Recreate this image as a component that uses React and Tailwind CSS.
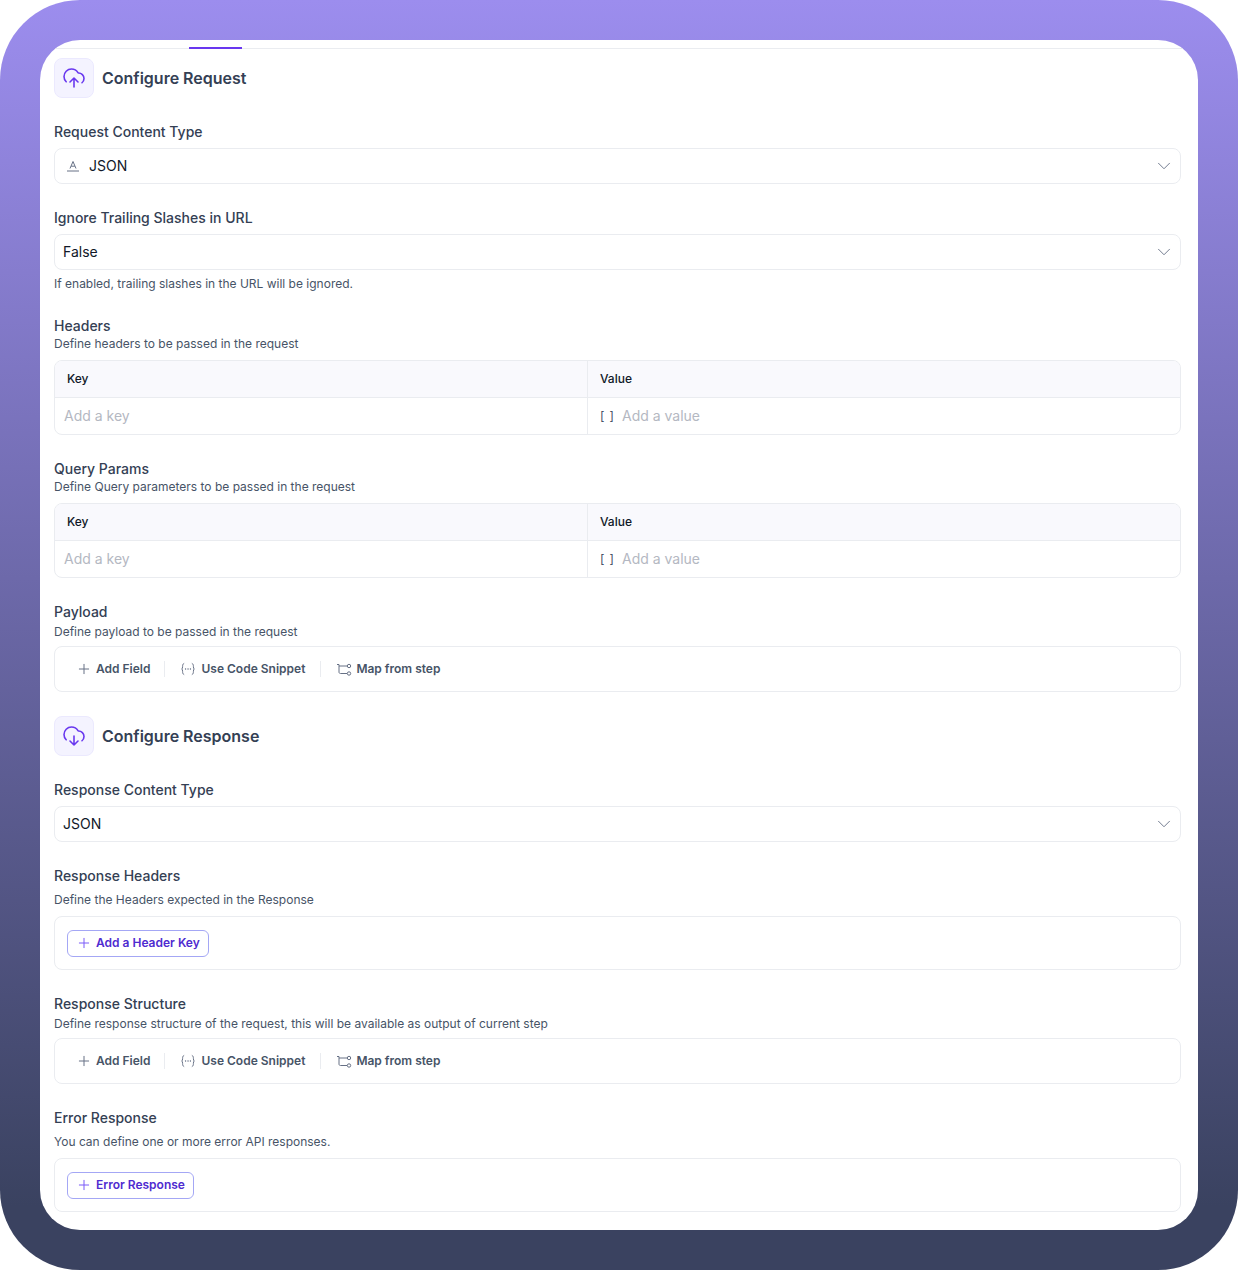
import { ChevronDown, Plus } from 'lucide-react';

const CloudUp = () => (
    <svg width="24" height="24" viewBox="0 0 24 24" fill="none" stroke="#6938ef" strokeWidth="1.6" strokeLinecap="round" strokeLinejoin="round">
        <path d="M8 16L12 12M12 12L16 16M12 12V21M20 16.7428C21.2215 15.734 22 14.2079 22 12.5C22 9.46243 19.5376 7 16.5 7C16.2815 7 16.0771 6.886 15.9661 6.69774C14.6621 4.48484 12.2544 3 9.5 3C5.35786 3 2 6.35786 2 10.5C2 12.5661 2.83545 14.4371 4.18695 15.7935" />
    </svg>
);

const CloudDown = () => (
    <svg width="24" height="24" viewBox="0 0 24 24" fill="none" stroke="#6938ef" strokeWidth="1.6" strokeLinecap="round" strokeLinejoin="round">
        <path d="M8 17L12 21M12 21L16 17M12 21V12M20 16.7428C21.2215 15.734 22 14.2079 22 12.5C22 9.46243 19.5376 7 16.5 7C16.2815 7 16.0771 6.886 15.9661 6.69774C14.6621 4.48484 12.2544 3 9.5 3C5.35786 3 2 6.35786 2 10.5C2 12.5661 2.83545 14.4371 4.18695 15.7935" />
    </svg>
);

const SectionTitle = ({ icon, title, className }) => (
    <div className={`flex items-center gap-2 ${className || ''}`}>
        <div className="flex h-10 w-10 items-center justify-center rounded-lg border border-[#ebe9fe] bg-[#f4f3ff]">
            {icon}
        </div>
        <h2 className="text-base font-semibold leading-6 text-[#344054]">{title}</h2>
    </div>
);

const Label = ({ children, className }) => (
    <div className={`h-5 text-sm font-medium leading-5 text-[#344054] ${className || ''}`}>{children}</div>
);

const Hint = ({ children, className }) => (
    <p className={`h-4 text-xs leading-4 text-[#475467] ${className || ''}`}>{children}</p>
);

const JsonIcon = () => (
    <svg width="14" height="14" viewBox="0 0 14 14" fill="none" stroke="#667085" strokeWidth="1" className="mr-[9px] ml-[3px]">
        <path d="M4 9.5 L7 2.5 L10 9.5 M5.2 7.2 H8.8" />
        <path d="M1 12 H13" />
    </svg>
);

const Select = ({ value, icon }) => (
    <div className="flex h-9 items-center rounded-lg border border-[#eaecf0] bg-white pr-[5px] pl-2">
        {icon}
        <span className="flex-1 text-sm leading-5 text-[#101828]">{value}</span>
        <ChevronDown size={22} strokeWidth={1} className="text-[#667085]" />
    </div>
);

const KeyValueTable = () => (
    <div className="mt-2 overflow-hidden rounded-lg border border-[#eaecf0]">
        <div className="flex h-[37px] border-b border-[#eaecf0] bg-[#f9f9fd] text-xs font-medium text-[#101828]">
            <div className="flex w-[533px] items-center border-r border-[#eaecf0] pl-3">Key</div>
            <div className="flex flex-1 items-center pl-3">Value</div>
        </div>
        <div className="flex h-9 text-sm text-[#b4b8c2]">
            <div className="flex w-[533px] items-center border-r border-[#eaecf0] pl-[9px]">Add a key</div>
            <div className="flex flex-1 items-center pl-3">
                <span className="mr-2 flex w-[14px] justify-between text-xs text-[#475467]">
                    <span>[</span>
                    <span>]</span>
                </span>
                Add a value
            </div>
        </div>
    </div>
);

const SnippetIcon = () => (
    <svg width="16" height="16" viewBox="0 0 16 16" fill="none" stroke="#667085" strokeWidth="1" strokeLinecap="round">
        <path d="M3.8 2.5 C2.8 3 2.6 4 2.6 5.5 C2.6 6.8 2.3 7.5 1.8 8 C2.3 8.5 2.6 9.2 2.6 10.5 C2.6 12 2.8 13 3.8 13.5" />
        <path d="M12.2 2.5 C13.2 3 13.4 4 13.4 5.5 C13.4 6.8 13.7 7.5 14.2 8 C13.7 8.5 13.4 9.2 13.4 10.5 C13.4 12 13.2 13 12.2 13.5" />
        <path d="M5.5 8 H5.6 M8 8 H8.1 M10.4 8 H10.5" strokeWidth="1.3" />
    </svg>
);

const MapIcon = () => (
    <svg width="16" height="16" viewBox="0 0 16 16" fill="none" stroke="#667085" strokeWidth="1">
        <path d="M1 3.5 H3 V11 C3 12 3.6 12.5 4.5 12.5 H11" />
        <path d="M3 5 H11" />
        <circle cx="13" cy="5" r="1.7" />
        <circle cx="13" cy="12.5" r="1.7" />
    </svg>
);

const FieldActions = () => (
    <div className="flex h-[46px] items-center rounded-lg border border-[#eaecf0] pl-[21px] text-xs font-semibold text-[#475467]">
        <span className="flex items-center gap-[2px] pr-[14px]">
            <Plus size={16} strokeWidth={1.5} className="text-[#667085]" />
            <span className="ml-0.5">Add Field</span>
        </span>
        <span className="h-4 border-l border-[#eaecf0]" />
        <span className="flex items-center gap-[5px] pr-[15px] pl-[15px]">
            <SnippetIcon />
            Use Code Snippet
        </span>
        <span className="h-4 border-l border-[#eaecf0]" />
        <span className="flex items-center gap-1 pl-[15px]">
            <MapIcon />
            Map from step
        </span>
    </div>
);

const AddBox = ({ label }) => (
    <div className="flex h-[54px] items-center rounded-lg border border-[#eaecf0] pl-3">
        <button className="flex h-[27px] items-center gap-1 rounded-md border border-[#a4a7f5] bg-white pr-2 pl-2 text-xs font-semibold text-[#4f2bd0]">
            <Plus size={16} strokeWidth={1.5} className="text-[#7a5af8]" />
            {label}
        </button>
    </div>
);

export default function App() {
    return (
        <div
            className="h-[1270px] w-[1238px] rounded-[80px] bg-[linear-gradient(180deg,#9c8dee_0%,#3a4260_95%)] p-10"
            style={{ fontFamily: 'Inter, sans-serif' }}
        >
            <div className="h-[1190px] overflow-hidden rounded-[40px] bg-white">
                {/* Tab strip */}
                <div className="relative h-[9px] border-b border-[#eaecf0]">
                    <span className="absolute top-[7px] left-[149px] h-0.5 w-[53px] bg-[#6938ef]" />
                </div>

                <div className="pt-[9px] pr-[17px] pl-[14px]">
                    <SectionTitle icon={<CloudUp />} title="Configure Request" />

                    <Label className="mt-6 mb-1.5">Request Content Type</Label>
                    <Select value="JSON" icon={<JsonIcon />} />

                    <Label className="mt-6 mb-1.5">Ignore Trailing Slashes in URL</Label>
                    <Select value="False" />
                    <Hint className="mt-1.5">If enabled, trailing slashes in the URL will be ignored.</Hint>

                    <Label className="mt-6">Headers</Label>
                    <Hint>Define headers to be passed in the request</Hint>
                    <KeyValueTable />

                    <Label className="mt-6">Query Params</Label>
                    <Hint>Define Query parameters to be passed in the request</Hint>
                    <KeyValueTable />

                    <Label className="mt-6">Payload</Label>
                    <Hint className="mt-0.5 mb-1.5">Define payload to be passed in the request</Hint>
                    <FieldActions />

                    <SectionTitle icon={<CloudDown />} title="Configure Response" className="mt-6" />

                    <Label className="mt-6 mb-1.5">Response Content Type</Label>
                    <Select value="JSON" />

                    <Label className="mt-6">Response Headers</Label>
                    <Hint className="mt-1.5 mb-2">Define the Headers expected in the Response</Hint>
                    <AddBox label="Add a Header Key" />

                    <Label className="mt-6">Response Structure</Label>
                    <Hint className="mt-0.5 mb-1.5">Define response structure of the request, this will be available as output of current step</Hint>
                    <FieldActions />

                    <Label className="mt-6">Error Response</Label>
                    <Hint className="mt-1.5 mb-2">You can define one or more error API responses.</Hint>
                    <AddBox label="Error Response" />
                </div>
            </div>
        </div>
    );
}
